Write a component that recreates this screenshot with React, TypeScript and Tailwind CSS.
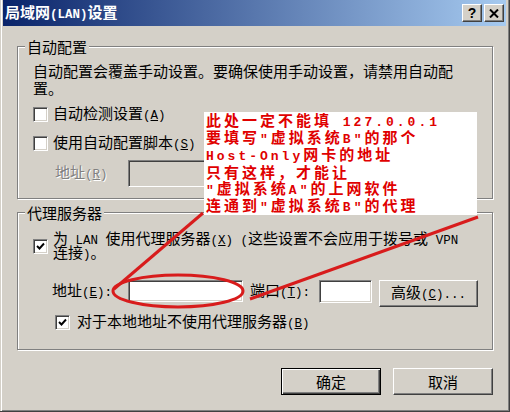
import React from "react";

const M = ({ children, className = "" }: { children: React.ReactNode; className?: string }) => (
  <span className={"font-['Liberation_Mono',monospace] text-[12.5px] " + className}>{children}</span>
);

const Key = ({ k }: { k: string }) => (
  <M>
    (<u>{k}</u>)
  </M>
);

const A = ({ children }: { children: React.ReactNode }) => (
  <span className="font-['Liberation_Mono',monospace] text-[13px] font-bold">{children}</span>
);

function Check({ checked }: { checked?: boolean }) {
  return (
    <span className="w-[15px] h-[15px] shrink-0 border border-t-[#808080] border-l-[#808080] border-b-white border-r-white bg-white shadow-[inset_1px_1px_0_#404040,inset_-1px_-1px_0_#d4d0c8] flex items-center justify-center">
      {checked && (
        <svg width="9" height="9" viewBox="0 0 9 9">
          <path d="M1 4 L3.5 6.5 L8 1.5" stroke="#000" strokeWidth="1.9" fill="none" />
        </svg>
      )}
    </span>
  );
}

function Sunken({ className = "" }: { className?: string }) {
  return (
    <span
      className={
        "block shrink-0 border border-t-[#808080] border-l-[#808080] border-b-white border-r-white shadow-[inset_1px_1px_0_#404040,inset_-1px_-1px_0_#d4d0c8] " +
        className
      }
    />
  );
}

function Btn({ children, className = "", def }: { children: React.ReactNode; className?: string; def?: boolean }) {
  return (
    <div
      className={
        "flex items-center justify-center shrink-0 bg-[#d4d0c8] " +
        (def
          ? "border border-black shadow-[inset_1px_1px_0_#fff,inset_-1px_-1px_0_#404040,inset_-2px_-2px_0_#808080] "
          : "border border-t-white border-l-white border-b-[#404040] border-r-[#404040] shadow-[inset_-1px_-1px_0_#808080] ") +
        className
      }
    >
      {children}
    </div>
  );
}

function Group({ title, className = "", children }: { title: string; className?: string; children: React.ReactNode }) {
  return (
    <div className={"relative border border-[#808080] shadow-[inset_1px_1px_0_#fff,1px_1px_0_#fff] " + className}>
      <span className="absolute -top-[9px] left-[7px] px-[2px] bg-[#d4d0c8] leading-[17px]">{title}</span>
      {children}
    </div>
  );
}

const Line = ({ h, children }: { h: string; children: React.ReactNode }) => (
  <div className={"whitespace-nowrap flex items-center " + h}>
    <span>{children}</span>
  </div>
);

export default function App() {
  return (
    <div className="w-[510px] h-[412px] relative overflow-hidden bg-[#d4d0c8] border-r border-b border-[#404040] shadow-[inset_1px_0_0_#d4d0c8,inset_2px_0_0_#fff,inset_-1px_-1px_0_#808080] flex flex-col px-[3px] font-['Noto_Sans_CJK_SC',sans-serif] text-[15px] leading-[17px] text-black">
      {/* Title bar */}
      <div className="h-[26px] shrink-0 flex items-center bg-[linear-gradient(to_right,#0a246a,#a6caf0)]">
        <span className="ml-[2px] text-white font-bold text-[15px] leading-[18px]">
          局域网<M className="font-bold">(LAN)</M>设置
        </span>
        <div className="ml-auto mr-[2px] flex gap-[2px]">
          <Btn className="w-[20px] h-[18px]">
            <span className="font-['Liberation_Sans',sans-serif] font-bold text-[14px] leading-none">?</span>
          </Btn>
          <Btn className="w-[20px] h-[18px]">
            <svg width="10" height="9" viewBox="0 0 10 9">
              <path d="M1 0.5 L9 8.5 M9 0.5 L1 8.5" stroke="#000" strokeWidth="2" />
            </svg>
          </Btn>
        </div>
      </div>

      {/* Group 1 */}
      <Group title="自动配置" className="ml-[14px] mt-[20px] w-[476px] shrink-0">
        <div className="pl-[15px] pt-[15px] pb-[11px]">
          <Line h="h-[17px]">自动配置会覆盖手动设置。要确保使用手动设置，请禁用自动配</Line>
          <Line h="h-[17px]">置。</Line>
          <div className="mt-[10px] h-[17px] flex items-center gap-[5px]">
            <Check />
            <span className="whitespace-nowrap">
              自动检测设置<Key k="A" />
            </span>
          </div>
          <div className="mt-[12px] h-[17px] flex items-center gap-[5px]">
            <Check />
            <span className="whitespace-nowrap">
              使用自动配置脚本<Key k="S" />
            </span>
          </div>
          <div className="mt-[8px] h-[27px] flex items-center">
            <span className="ml-[22px] w-[73px] whitespace-nowrap text-[#808080] [text-shadow:1px_1px_0_#fff]">
              地址<Key k="R" />
            </span>
            <Sunken className="w-[342px] h-[27px] bg-[#d4d0c8]" />
          </div>
        </div>
      </Group>

      {/* Group 2 */}
      <Group title="代理服务器" className="ml-[14px] mt-[13px] w-[476px] shrink-0">
        <div className="pl-[15px] pt-[19px] pb-[19px]">
          <div className="h-[28px] flex items-center gap-[5px]">
            <Check checked />
            <div>
              <Line h="h-[14px]">
                为<M> LAN </M>使用代理服务器<Key k="X" />
                <M> (</M>这些设置不会应用于拨号或<M> VPN</M>
              </Line>
              <Line h="h-[14px]">
                连接<M>)</M>。
              </Line>
            </div>
          </div>
          <div className="mt-[20px] h-[27px] flex items-start">
            <div className="ml-[19px] w-[76px] h-[22px] flex items-center whitespace-nowrap">
              <span>
                地址<Key k="E" />
                <M>:</M>
              </span>
            </div>
            <Sunken className="w-[115px] h-[22px] bg-white" />
            <div className="ml-[7px] w-[69px] h-[22px] flex items-center whitespace-nowrap">
              <span>
                端口<Key k="T" />
                <M>:</M>
              </span>
            </div>
            <Sunken className="w-[53px] h-[23px] bg-white" />
            <Btn className="ml-[7px] w-[99px] h-[27px]">
              <span className="whitespace-nowrap">
                高级<Key k="C" />
                <M>...</M>
              </span>
            </Btn>
          </div>
          <div className="mt-[8px] ml-[22px] h-[15px] flex items-center gap-[7px]">
            <Check checked />
            <span className="whitespace-nowrap">
              对于本地地址不使用代理服务器<Key k="B" />
            </span>
          </div>
        </div>
      </Group>

      {/* Bottom buttons */}
      <div className="mt-[18px] mr-[13px] flex justify-end gap-[12px] shrink-0">
        <Btn def className="w-[100px] h-[27px]">
          确定
        </Btn>
        <Btn className="w-[100px] h-[27px]">取消</Btn>
      </div>

      {/* Annotation overlay */}
      <div className="absolute left-[204px] top-[112px] w-[273px] h-[103px] bg-white pl-[2px] text-[#e00000] font-bold text-[15px] tracking-[3px] whitespace-nowrap">
        <Line h="h-[17px]">
          此处一定不能填<A> 127.0.0.1</A>
        </Line>
        <Line h="h-[17px]">
          要填写<A>"</A>虚拟系统<A>B"</A>的那个
        </Line>
        <Line h="h-[17px]">
          <A>Host-Only</A>网卡的地址
        </Line>
        <Line h="h-[17px]">只有这样，才能让</Line>
        <Line h="h-[17px]">
          <A>"</A>虚拟系统<A>A"</A>的上网软件
        </Line>
        <Line h="h-[17px]">
          连通到<A>"</A>虚拟系统<A>B"</A>的代理
        </Line>
      </div>

      <svg className="absolute left-0 top-0 pointer-events-none" width="510" height="412" viewBox="0 0 510 412">
        <line x1="203" y1="213" x2="114" y2="289" stroke="#d81c1c" strokeWidth="3" />
        <line x1="478" y1="217" x2="250" y2="299" stroke="#d81c1c" strokeWidth="3" />
        <ellipse cx="178" cy="291" rx="65" ry="16" fill="none" stroke="#d81c1c" strokeWidth="3" />
      </svg>
    </div>
  );
}
